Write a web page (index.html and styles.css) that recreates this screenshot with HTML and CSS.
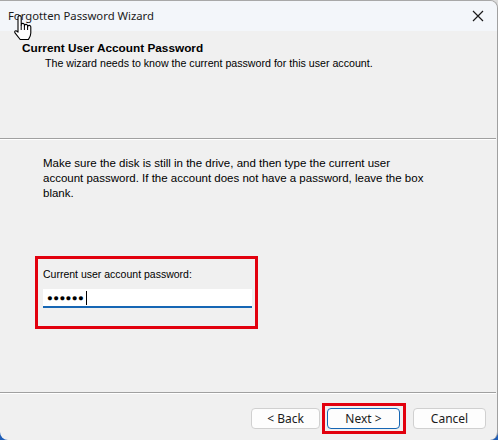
FILE: index.html
```html
<!DOCTYPE html>
<html lang="en">
<head>
	<meta charset="UTF-8">
	<title>Forgotten Password Wizard</title>
	<link rel="stylesheet" href="styles.css">
</head>
<body>
	<div class="window">
		<div class="titlebar">
			<span class="title">Forgotten Password Wizard</span>
			<svg class="close" width="12" height="12" viewBox="0 0 12 12"><path d="M1 1L11 11M11 1L1 11" stroke="#1a1a1a" stroke-width="1.2" fill="none"/></svg>
		</div>
		<div class="header">
			<div class="head-title">Current User Account Password</div>
			<div class="head-sub">The wizard needs to know the current password for this user account.</div>
		</div>
		<div class="sep"></div>
		<div class="content">
			<p class="intro">Make sure the disk is still in the drive, and then type the current user<br>account password. If the account does not have a password, leave the box<br>blank.</p>
			<div class="mark">
				<div class="label">Current user account password:</div>
				<div class="input"><span class="dots">&#9679;&#9679;&#9679;&#9679;&#9679;&#9679;</span><span class="caret"></span></div>
			</div>
		</div>
		<div class="sep"></div>
		<div class="buttons">
			<button class="btn back">&lt; Back</button>
			<span class="mark-btn"><button class="btn default">Next &gt;</button></span>
			<button class="btn cancel">Cancel</button>
		</div>
	</div>
	<!-- mouse pointer over the title -->
	<svg class="pointer" width="22" height="26" viewBox="0 0 22 26">
		<path d="M6 2.2a1.6 1.6 0 0 1 3.2 0V10a1.6 1.6 0 0 1 3.2 0v1a1.6 1.6 0 0 1 3.2 0v1a1.6 1.6 0 0 1 3.2 0V18c0 3-1.4 5-2.4 6.5H8.2L3 17.8c-0.9-1.2 0.3-2.6 1.6-1.8L6 17.2Z" fill="#fff" stroke="#000" stroke-width="1.1" stroke-linejoin="round"/>
		<path d="M9.2 10v5M12.4 11v4M15.6 12v3" stroke="#000" stroke-width="1" fill="none"/>
	</svg>
</body>
</html>
```
FILE: styles.css
```css
*{
	margin: 0;
	padding: 0;
	box-sizing: border-box;
}
body{
	width: 498px;
	height: 440px;
	overflow: hidden;
	position: relative;
	background: linear-gradient(#dcdcdc 0, #dcdcdc 50%, #1d5cb6 50%);
	font-family: "Liberation Sans", Arial, sans-serif;
	font-size: 11px;
	color: #000;
}
.window{
	width: 498px;
	height: 440px;
	background: #f0f0f0;
	border-top: 1px solid #a8a8a8;
	border-right: 1px solid #a0a0a0;
	border-radius: 0 8px 8px 8px;
	overflow: hidden;
	display: flex;
	flex-direction: column;
}
.titlebar{
	height: 30px;
	background: #f3f6fa;
	display: flex;
	align-items: center;
	justify-content: space-between;
	padding: 0 13px 0 8px;
}
.title{
	font-family: "Noto Sans", sans-serif;
	font-size: 11.3px;
	color: #1b1b1b;
	margin-top: -1px;
}
.close{
	margin-top: -1px;
}
.header{
	height: 107px;
	padding: 10px 0 0 22px;
}
.head-title{
	font-weight: bold;
	font-size: 11.8px;
	line-height: 14px;
}
.head-sub{
	padding-left: 23px;
	margin-top: 1px;
	font-size: 10.65px;
	line-height: 14px;
}
.sep{
	height: 2px;
	border-top: 1px solid #a0a0a0;
	border-bottom: 1px solid #fff;
	margin-right: 1px;
}
.content{
	flex: 1;
	padding: 16px 0 0 43px;
}
.intro{
	width: 440px;
	font-size: 11.5px;
	line-height: 15px;
}
.mark{
	width: 223px;
	height: 73px;
	margin: 55px 0 0 -8px;
	border: 3px solid #e2000e;
	padding: 8px 0 0 5px;
}
.label{
	font-size: 10.5px;
	line-height: 14px;
}
.input{
	width: 209px;
	height: 19px;
	margin-top: 8px;
	background: #fff;
	border-bottom: 2px solid #1666b4;
	display: flex;
	align-items: center;
	padding-left: 4px;
}
.dots{
	font-size: 9.6px;
	letter-spacing: 0.4px;
	line-height: 1;
}
.caret{
	display: inline-block;
	width: 1px;
	height: 14px;
	background: #000;
	margin-left: 2px;
}
.buttons{
	height: 46px;
	display: flex;
	align-items: flex-start;
	justify-content: flex-end;
	padding: 9px 11px 0 0;
}
.btn{
	flex-shrink: 0;
	height: 21px;
	margin-top: 5px;
	background: #fdfdfd;
	border: 1px solid #d0d0d0;
	border-radius: 4px;
	font-family: "Noto Sans", sans-serif;
	font-size: 12px;
	color: #1b1b1b;
}
.back{
	width: 69px;
}
.mark-btn{
	flex-shrink: 0;
	border: 3px solid #e2000e;
	padding: 2px 3px 2px 2px;
	margin-left: 2px;
	display: flex;
}
.mark-btn .btn{
	margin-top: 0;
	width: 73px;
	border-color: #1666b4;
}
.cancel{
	width: 73px;
	margin-left: 7px;
}
.pointer{
	position: absolute;
	left: 12px;
	top: 15px;
}
```
